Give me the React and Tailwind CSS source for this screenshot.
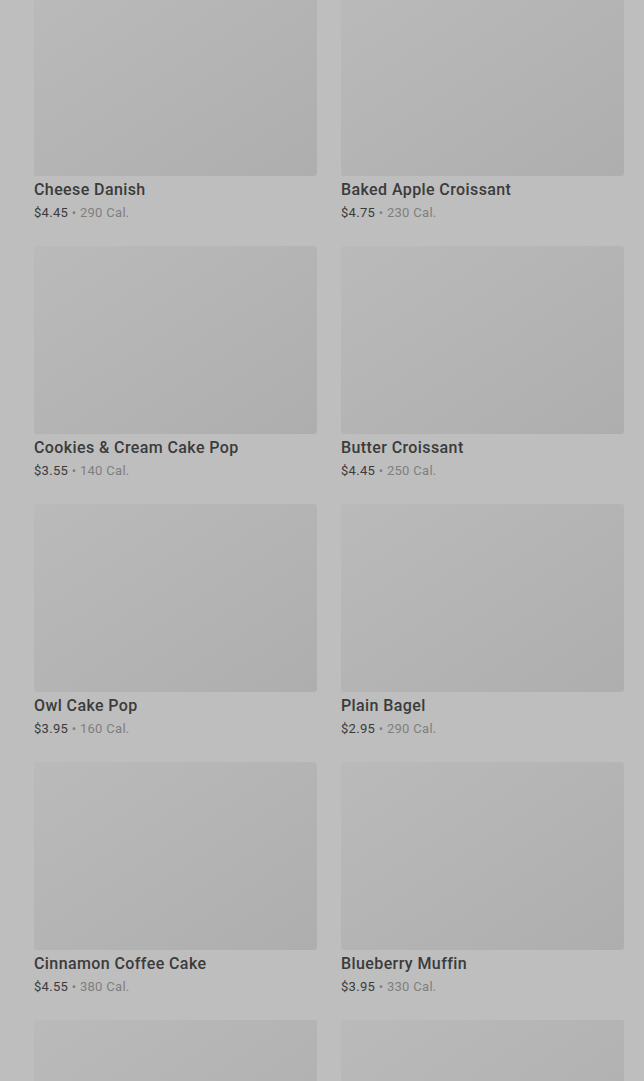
import React from "react";

const items = [
  ["Cheese Danish", "$4.45", "290 Cal."],
  ["Baked Apple Croissant", "$4.75", "230 Cal."],
  ["Cookies & Cream Cake Pop", "$3.55", "140 Cal."],
  ["Butter Croissant", "$4.45", "250 Cal."],
  ["Owl Cake Pop", "$3.95", "160 Cal."],
  ["Plain Bagel", "$2.95", "290 Cal."],
  ["Cinnamon Coffee Cake", "$4.55", "380 Cal."],
  ["Blueberry Muffin", "$3.95", "330 Cal."],
  ["", "", ""],
  ["", "", ""],
];

function Card({ name, price, cal }) {
  return (
    <div className="flex flex-col h-[258px]">
      <div className="h-[188px] rounded-[3px] bg-gradient-to-br from-[#bababa] via-[#b4b4b4] to-[#aeaeae]" />
      {name && (
        <div className="pt-[3px]">
          <div className="text-[16px] leading-[22px] font-medium tracking-[0.4px] text-[#3b3b3b]">{name}</div>
          <div className="text-[13px] leading-[20px] mt-[2px] tracking-[0.3px]">
            <span className="text-[#3b3b3b]">{price}</span>
            <span className="text-[#7f7f7f]"> • {cal}</span>
          </div>
        </div>
      )}
    </div>
  );
}

export default function App() {
  return (
    <div
      className="w-[644px] h-[1081px] overflow-hidden bg-[#bebebe]"
      style={{ fontFamily: "Roboto, 'Liberation Sans', sans-serif" }}
    >
      <div className="mt-[-12px] pl-[34px] pr-[20px] grid grid-cols-2 gap-x-[24px]">
        {items.map((it, i) => (
          <Card key={i} name={it[0]} price={it[1]} cal={it[2]} />
        ))}
      </div>
    </div>
  );
}
